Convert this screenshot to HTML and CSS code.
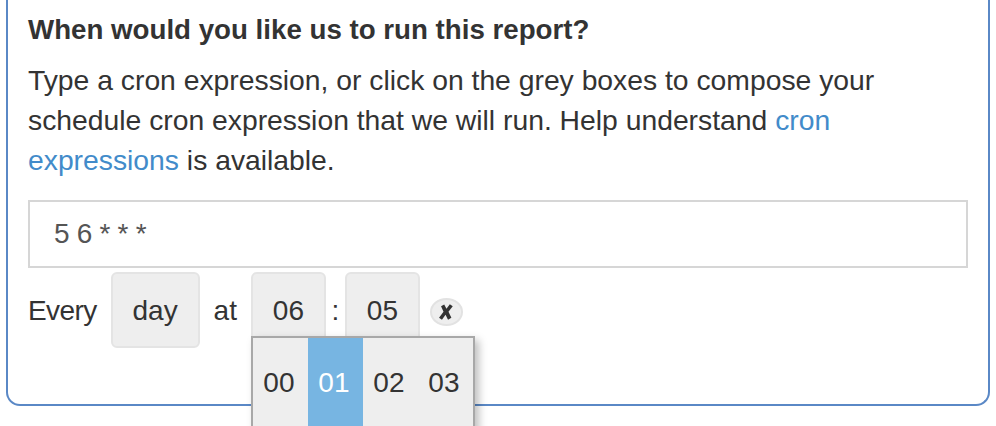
FILE: index.html
```html
<!DOCTYPE html>
<html lang="en">
<head>
<meta charset="utf-8">
<title>Schedule report</title>
<link rel="stylesheet" href="styles.css">
</head>
<body>
<section class="panel">
  <h2 class="title">When would you like us to run this report?</h2>
  <p class="intro">Type a cron expression, or click on the grey boxes to compose your schedule cron expression that we will run. Help understand <a href="#">cron expressions</a> is available.</p>
  <input class="cron-input" type="text" value="5 6 * * *">
  <div class="cron-row">
    <span class="label label-every">Every</span>
    <span class="box box-day">day</span>
    <span class="label label-at">at</span>
    <span class="box-wrap">
      <span class="box box-time">06</span>
      <div class="popup">
        <span class="cell">00</span>
        <span class="cell cell-active">01</span>
        <span class="cell">02</span>
        <span class="cell">03</span>
      </div>
    </span>
    <span class="label label-colon">:</span>
    <span class="box box-time">05</span>
    <span class="clear">
      <svg viewBox="0 0 16 16" width="18" height="18" aria-hidden="true"><path d="M3.6 2.8 6.4 1.4 8.4 5 11.4 1.2 14 2.8 10.2 7.8 12.8 13 9.8 14.8 7.6 10.4 4.4 14.8 1.8 13 5.8 7.8Z"/></svg>
    </span>
  </div>
</section>
</body>
</html>
```
FILE: styles.css
```css
html, body {
  margin: 0;
  height: 426px;
  overflow: hidden;
  background: #fff;
}
body {
  padding: 0 6px;
  box-sizing: border-box;
  font-family: "Liberation Sans", Arial, sans-serif;
  font-size: 28px;
  line-height: 40px;
  color: #333;
}
.panel {
  box-sizing: border-box;
  height: 406px;
  border: 2px solid #5a88c6;
  border-top: 0;
  border-radius: 0 0 14px 14px;
  padding: 10px 20px 0;
}
.title {
  margin: 0 0 10px;
  font-size: 27.7px;
  line-height: 40px;
  font-weight: 700;
}
.intro {
  margin: 0 0 20px;
  font-size: 28.3px;
}
.intro a {
  color: #428bca;
  text-decoration: none;
}
.cron-input {
  display: block;
  box-sizing: border-box;
  width: 940px;
  height: 68px;
  padding: 0 24px;
  border: 2px solid #d6d6d6;
  border-radius: 0;
  background: #fff;
  font: inherit;
  font-size: 28px;
  letter-spacing: -0.3px;
  color: #555;
  outline: 0;
}
.cron-row {
  display: flex;
  align-items: center;
  margin-top: 4px;
  height: 76px;
}
.label {
  padding-top: 2px;
}
.label-every {
  letter-spacing: -0.6px;
}
.box {
  display: flex;
  align-items: center;
  justify-content: center;
  box-sizing: border-box;
  height: 76px;
  padding-top: 2px;
  background: #eee;
  border: 2px solid #e4e4e4;
  border-radius: 6px;
}
.box-day {
  width: 89px;
  margin-left: 14px;
}
.label-at {
  margin: 0 14px;
}
.box-time {
  width: 75px;
}
.box-wrap {
  position: relative;
}
.label-colon {
  width: 19px;
  text-align: center;
}
.popup {
  position: absolute;
  left: 0;
  top: 64px;
  z-index: 2;
  display: flex;
  box-sizing: border-box;
  width: 224px;
  height: 120px;
  background: #eee;
  border: 2px solid #a8a8a8;
  box-shadow: 4px 4px 8px rgba(0, 0, 0, 0.25);
}
.cell {
  flex: 1;
  padding: 25px 3px 0 0;
  text-align: center;
}
.cell-active {
  background: #77b5e2;
  color: #fff;
}
.clear {
  display: flex;
  align-items: center;
  justify-content: center;
  box-sizing: border-box;
  width: 33px;
  height: 28px;
  margin: 3px 0 0 10px;
  background: #eee;
  border: 2px solid #e2e2e2;
  border-radius: 50%;
}
.clear svg {
  fill: #333;
}
```
